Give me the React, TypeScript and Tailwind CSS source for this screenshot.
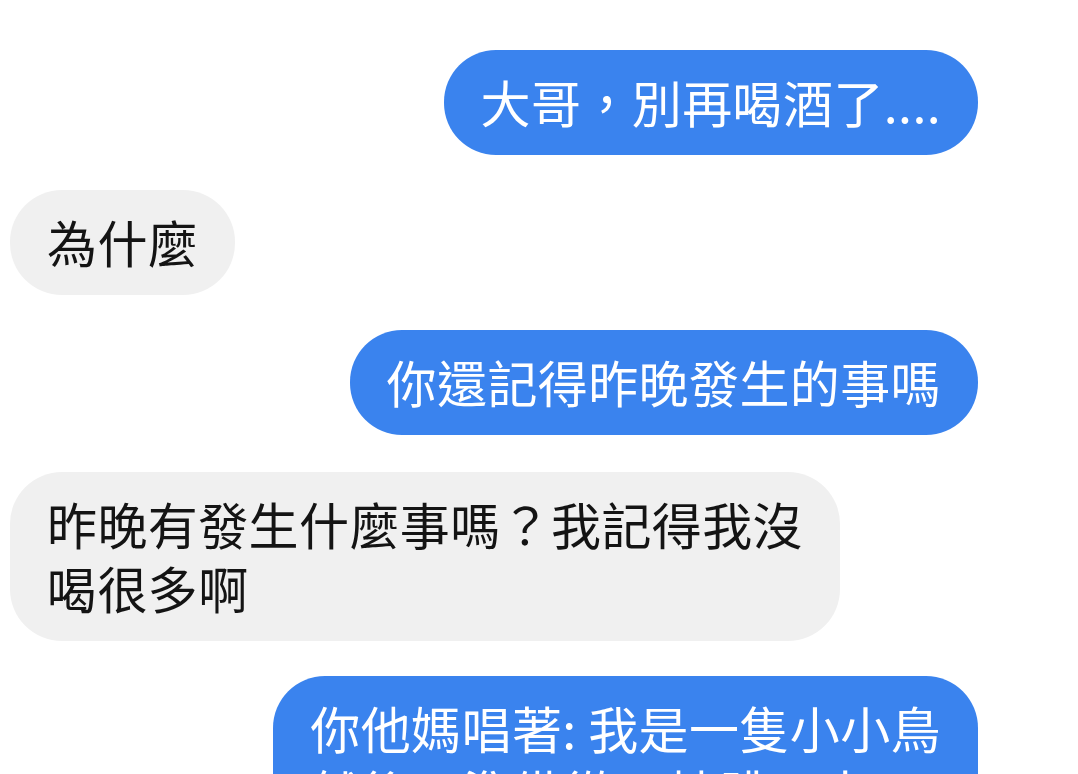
import React from "react";

const font = {
  fontFamily: '"Noto Sans CJK TC", "Noto Sans CJK SC", "Noto Sans", sans-serif',
};

function Mine({ children }: { children: React.ReactNode }) {
  return (
    <div className="self-end w-fit rounded-[52px] bg-[#3a83ee] px-[37px] pt-[18.5px] pb-[22.5px] text-[50px] leading-[64px] tracking-[0.4px] text-white whitespace-pre-line">
      {children}
    </div>
  );
}

function Theirs({ children, className = "" }: { children: React.ReactNode; className?: string }) {
  return (
    <div
      className={`self-start w-fit rounded-[52px] bg-[#f0f0f0] px-[37px] pt-[18.5px] pb-[22.5px] text-[50px] leading-[64px] tracking-[0.4px] text-[#141414] whitespace-pre-line ${className}`}
    >
      {children}
    </div>
  );
}

export default function App() {
  return (
    <div
      className="w-[1078px] h-[774px] overflow-hidden bg-white flex flex-col gap-[35px] pt-[50px] pl-[10px] pr-[100px]"
      style={font}
    >
      <Mine>大哥，別再喝酒了....</Mine>
      <Theirs>為什麼</Theirs>
      <Mine>你還記得昨晚發生的事嗎</Mine>
      <Theirs className="mt-[2px]">{"昨晚有發生什麼事嗎？我記得我沒\n喝很多啊"}</Theirs>
      <Mine>{"你他媽唱著: 我是一隻小小鳥\n然後正準備從10樓跳下去"}</Mine>
    </div>
  );
}
